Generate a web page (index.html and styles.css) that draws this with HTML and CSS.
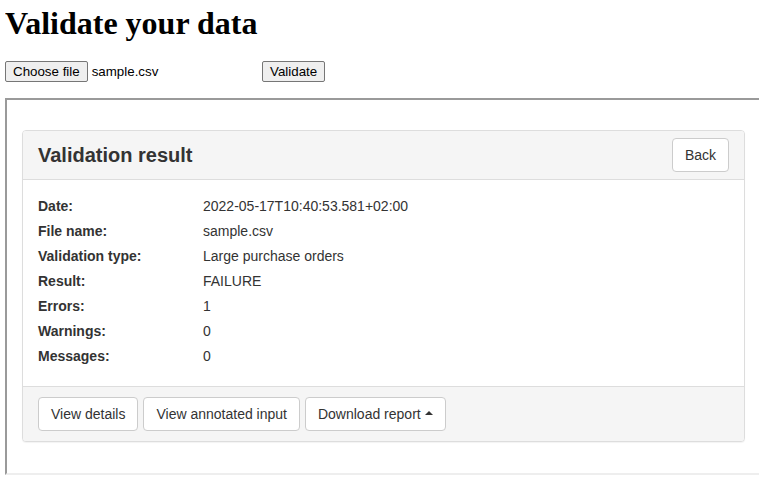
FILE: index.html
```html
<!DOCTYPE html>
<html lang="en">
<head>
    <meta charset="UTF-8">
    <meta name="viewport" content="width=device-width, initial-scale=1.0">
    <title>Validate your data</title>
    <link rel="stylesheet" href="styles.css">
</head>
<body>
    <h1>Validate your data</h1>
    <form class="upload" onsubmit="return false;">
        <div class="file-input">
            <button type="button" class="native-btn">Choose file</button>
            <span class="file-name">sample.csv</span>
        </div>
        <button type="submit" class="native-btn">Validate</button>
    </form>

    <!-- result frame -->
    <div class="frame">
        <div class="panel">
            <div class="panel-heading">
                <h3 class="panel-title">Validation result</h3>
                <button type="button" class="btn">Back</button>
            </div>
            <div class="panel-body">
                <div class="row"><span class="label">Date:</span><span>2022-05-17T10:40:53.581+02:00</span></div>
                <div class="row"><span class="label">File name:</span><span>sample.csv</span></div>
                <div class="row"><span class="label">Validation type:</span><span>Large purchase orders</span></div>
                <div class="row"><span class="label">Result:</span><span>FAILURE</span></div>
                <div class="row"><span class="label">Errors:</span><span>1</span></div>
                <div class="row"><span class="label">Warnings:</span><span>0</span></div>
                <div class="row"><span class="label">Messages:</span><span>0</span></div>
            </div>
            <div class="panel-footer">
                <button type="button" class="btn">View details</button>
                <button type="button" class="btn">View annotated input</button>
                <button type="button" class="btn">Download report <span class="caret"></span></button>
            </div>
        </div>
    </div>
</body>
</html>
```

FILE: styles.css
```css
body {
    margin: 0 5px;
    font-family: "Liberation Serif", "Times New Roman", serif;
    color: #000;
    background: #fff;
}
h1 {
    font-size: 32px;
    margin: 5px 0 0;
    line-height: 37px;
}
.upload {
    display: flex;
    align-items: center;
    margin-top: 19px;
    height: 21px;
}
.file-input {
    display: flex;
    align-items: center;
    width: 257px;
}
.native-btn {
    font-family: "Liberation Sans", Arial, sans-serif;
    font-size: 13.333px;
    line-height: 15px;
    color: #000;
    background-color: #efefef;
    border: 1px solid #767676;
    border-radius: 2px;
    padding: 2px 7px;
    height: 21px;
}
.file-name {
    font-family: "Liberation Sans", Arial, sans-serif;
    font-size: 13.333px;
    margin-left: 4px;
}

/* iframe-like box */
.frame {
    width: 723px;
    height: 343px;
    margin-top: 16px;
    padding: 30px 15px 0 15px;
    box-sizing: content-box;
    border-style: solid;
    border-width: 2px;
    border-color: #9a9a9a #eeeeee #eeeeee #9a9a9a;
    font-family: "Liberation Sans", Arial, sans-serif;
    font-size: 14px;
    color: #333;
}
.panel {
    border: 1px solid #ddd;
    border-radius: 4px;
    box-shadow: 0 1px 1px rgba(0, 0, 0, 0.05);
    background: #fff;
}
.panel-heading {
    display: flex;
    align-items: center;
    justify-content: space-between;
    padding: 7px 15px;
    background-color: #f5f5f5;
    border-bottom: 1px solid #ddd;
    border-radius: 3px 3px 0 0;
}
.panel-title {
    margin: 0;
    font-size: 20px;
    font-weight: bold;
    color: #333;
}
.btn {
    font-family: "Liberation Sans", Arial, sans-serif;
    font-size: 14px;
    line-height: 20px;
    color: #333;
    background-color: #fff;
    border: 1px solid #ccc;
    border-radius: 4px;
    padding: 6px 12px;
    cursor: pointer;
}
.btn:hover {
    background-color: #e6e6e6;
}
.panel-body {
    padding: 16px 15px 15px;
}
.row {
    display: flex;
    line-height: 20px;
    padding-bottom: 5px;
}
.label {
    width: 165px;
    font-weight: bold;
}
.panel-footer {
    display: flex;
    gap: 5px;
    padding: 10px 15px;
    background-color: #f5f5f5;
    border-top: 1px solid #ddd;
    border-radius: 0 0 3px 3px;
}
.caret {
    display: inline-block;
    width: 0;
    height: 0;
    vertical-align: middle;
    border-bottom: 4px solid #333;
    border-left: 4px solid transparent;
    border-right: 4px solid transparent;
    position: relative;
    top: -2px;
}
```
